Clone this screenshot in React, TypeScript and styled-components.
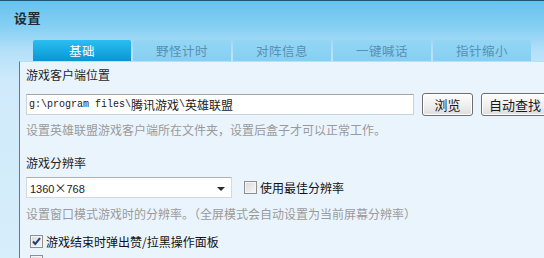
import React from "react";
import styled, { createGlobalStyle } from "styled-components";

const Global = createGlobalStyle`
  html, body {
    margin: 0;
    padding: 0;
    background: #d5edfb;
  }
  * {
    box-sizing: border-box;
  }
`;

const CJK = `"Noto Sans CJK SC", "Noto Sans", sans-serif`;

const Window = styled.div`
  width: 544px;
  height: 258px;
  overflow: hidden;
  display: flex;
  flex-direction: column;
  font-family: ${CJK};
  font-size: 12px;
  color: #222;
  border-top: 1px solid #1f5672;
  background: linear-gradient(
    to bottom,
    #66c3ef 0px,
    #84cff3 25px,
    #b4e0f8 50px,
    #cfeafa 80px,
    #d7eefb 100%
  );
`;

const TitleBar = styled.div`
  flex-shrink: 0;
  height: 39px;
  padding: 8px 0 0 14px;
  font-size: 13px;
  font-weight: bold;
  color: #1e2c33;
  line-height: 18px;
  letter-spacing: 0.5px;
`;

const TabStrip = styled.div`
  flex-shrink: 0;
  display: flex;
  gap: 2px;
  height: 21px;
  padding-left: 33px;
`;

const Tab = styled.div<{ $active?: boolean }>`
  width: 98px;
  height: 21px;
  display: flex;
  align-items: center;
  justify-content: center;
  font-size: 12.5px;
  letter-spacing: 0.5px;
  color: ${({ $active }) => ($active ? "#ffffff" : "#5790b5")};
  background: ${({ $active }) =>
    $active
      ? "linear-gradient(to bottom, #2cbdf0 0%, #16a6e0 60%, #0d94d1 100%)"
      : "linear-gradient(to bottom, #93d6f4 0%, #86cff2 100%)"};
  border-radius: 2px 2px 0 0;
`;

const Body = styled.div`
  flex: 1 0 auto;
  display: flex;
  padding-left: 19px;
`;

const Panel = styled.div`
  flex: 1;
  background: #eaf4fd;
  border-left: 1px solid #3b88ae;
  border-top: 1px solid #b9e1f5;
  padding: 5px 0 0 6px;
  display: flex;
  flex-direction: column;
`;

const Label = styled.div<{ $top: number }>`
  margin-top: ${({ $top }) => $top}px;
  line-height: 16px;
  color: #1f1f1f;
`;

const Help = styled.div<{ $top: number }>`
  margin-top: ${({ $top }) => $top}px;
  line-height: 16px;
  color: #9a9a9a;
  white-space: nowrap;
`;

const Row = styled.div<{ $top: number }>`
  margin-top: ${({ $top }) => $top}px;
  display: flex;
  align-items: center;
  white-space: nowrap;
`;

const PathInput = styled.div`
  width: 388px;
  height: 21px;
  background: #ffffff;
  border: 1px solid #c9d3da;
  border-top-color: #a3a3a3;
  padding-left: 2px;
  display: flex;
  align-items: center;
  font-size: 12px;
  color: #1a1a1a;
`;

const Mono = styled.span`
  font-family: "Liberation Mono", monospace;
  font-size: 10px;
`;

const Button = styled.div<{ $width: number; $gap: number }>`
  width: ${({ $width }) => $width}px;
  height: 23px;
  margin-left: ${({ $gap }) => $gap}px;
  flex-shrink: 0;
  border: 1px solid #6f6f6f;
  border-radius: 3px;
  background: linear-gradient(to bottom, #fdfdfd 0%, #f0f0f0 50%, #dedede 100%);
  box-shadow: inset 0 0 0 1px #ffffff;
  display: flex;
  align-items: center;
  justify-content: center;
  font-size: 13px;
  color: #1a1a1a;
`;

const Select = styled.div`
  width: 206px;
  height: 21px;
  background: #ffffff;
  border: 1px solid #d3dbe1;
  border-top-color: #b0b0b0;
  padding: 0 6px 0 3px;
  display: flex;
  align-items: center;
  justify-content: space-between;
`;

const Digits = styled.span`
  font-family: "Liberation Sans", Arial, sans-serif;
  font-size: 11px;
`;

const Arrow = styled.span`
  width: 0;
  height: 0;
  border-left: 4px solid transparent;
  border-right: 4px solid transparent;
  border-top: 4px solid #2a2a2a;
  margin-top: 2px;
`;

const CheckLabel = styled.label<{ $gap: number }>`
  margin-left: ${({ $gap }) => $gap}px;
  display: flex;
  align-items: center;
  gap: 3px;
  color: #111;
`;

const Box = styled.span`
  width: 13px;
  height: 13px;
  border: 1px solid #8d8f91;
  background: linear-gradient(135deg, #d9d9d9 0%, #ececec 60%, #f7f7f7 100%);
  box-shadow: inset 0 0 0 1px #f4f4f4;
  display: flex;
  align-items: center;
  justify-content: center;
`;

const Check = ({ checked }: { checked?: boolean }) => (
  <Box>
    {checked && (
      <svg width="9" height="9" viewBox="0 0 9 9">
        <path d="M1 4.5 L3.3 7 L8 1.2" fill="none" stroke="#1f3f7a" strokeWidth="2" />
      </svg>
    )}
  </Box>
);

const tabs = ["基础", "野怪计时", "对阵信息", "一键喊话", "指针缩小"];

const App = (): JSX.Element => {
  return (
    <>
      <Global />
      <Window>
        <TitleBar>设置</TitleBar>
        <TabStrip>
          {tabs.map((t, i) => (
            <Tab key={t} $active={i === 0}>
              {t}
            </Tab>
          ))}
        </TabStrip>
        <Body>
          <Panel>
            <Label $top={0}>游戏客户端位置</Label>
            <Row $top={10}>
              <PathInput>
                <Mono>g:\program files\</Mono>腾讯游戏<Mono>\</Mono>英雄联盟
              </PathInput>
              <Button $width={51} $gap={8}>浏览</Button>
              <Button $width={68} $gap={8}>自动查找</Button>
            </Row>
            <Help $top={6}>设置英雄联盟游戏客户端所在文件夹，设置后盒子才可以正常工作。</Help>
            <Label $top={17}>游戏分辨率</Label>
            <Row $top={6}>
              <Select>
                <span>
                  <Digits>1360</Digits>×<Digits>768</Digits>
                </span>
                <Arrow />
              </Select>
              <CheckLabel $gap={12}>
                <Check />
                使用最佳分辨率
              </CheckLabel>
            </Row>
            <Help $top={8}>设置窗口模式游戏时的分辨率。（全屏模式会自动设置为当前屏幕分辨率）</Help>
            <Row $top={11}>
              <CheckLabel $gap={4}>
                <Check checked />
                游戏结束时弹出赞/拉黑操作面板
              </CheckLabel>
            </Row>
            <Row $top={5}>
              <CheckLabel $gap={4}>
                <Check />
              </CheckLabel>
            </Row>
          </Panel>
        </Body>
      </Window>
    </>
  );
};

export default App;
